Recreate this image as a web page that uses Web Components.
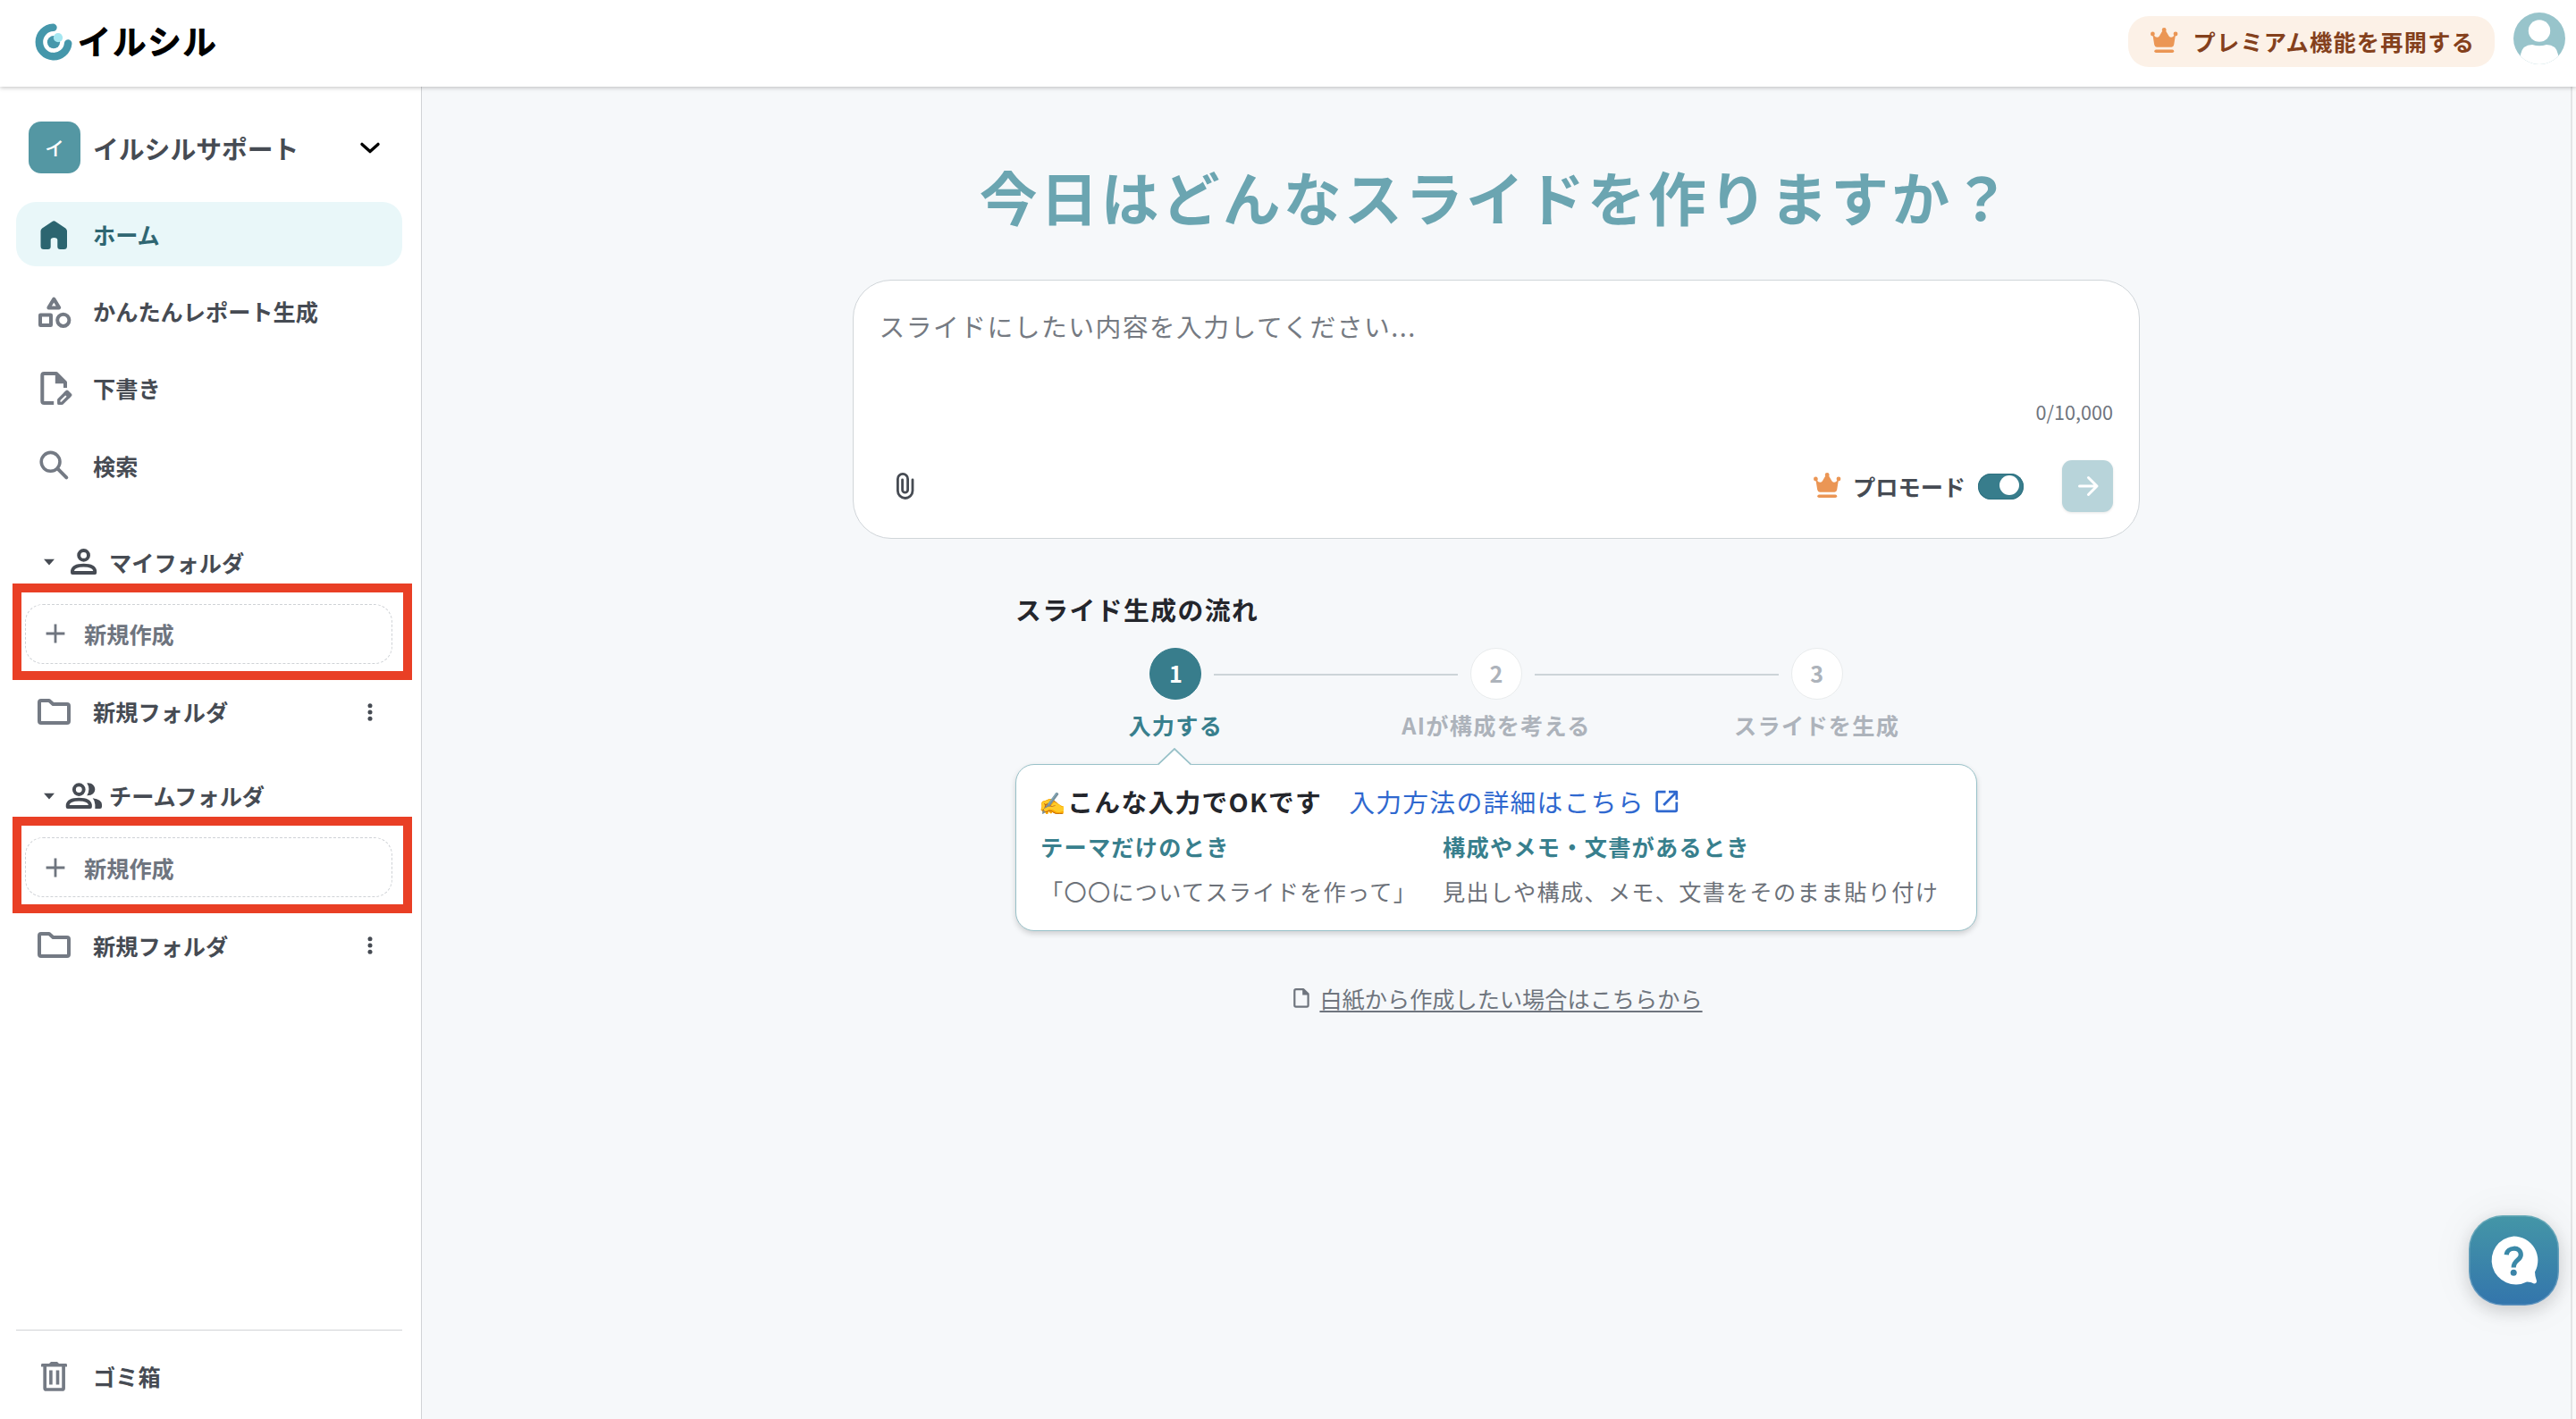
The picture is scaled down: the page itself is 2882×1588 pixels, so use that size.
<!DOCTYPE html>
<html lang="ja">
<head>
<meta charset="utf-8">
<title>イルシル</title>
<style>
    html, body {
        margin: 0;
        height: 100%;
        overflow: hidden;
    }

    body {
        font-family: "Noto Sans CJK JP", "Noto Sans", sans-serif;
        font-size: 25.2px;
        color: #464b53;
        background: #f6f8fa;
    }
</style>
</head>
<body>
<slide-app></slide-app>

<script>
    // [width, height, markup]
    const ICONS = {
        home: [36, 36, '<path fill="currentColor" d="M15 4.2Q17.3 2.4 19.6 4.2L30.4 11.4Q32 12.6 32 14.6V31.5Q32 35 28.5 35H24.3Q21.3 35 21.3 32V24.5Q21.3 22 17.5 22Q13.7 22 13.7 24.5V32Q13.7 35 10.7 35H6Q2.5 35 2.5 31.5V14.6Q2.5 12.6 4.1 11.4Z"/>'],
        shapes: [36, 36, '<g stroke-width="4"><path d="M17.3 4.6L23.2 14.4H11.4Z"/><rect x="2" y="22.4" width="12" height="11.6" rx=".3"/><circle cx="27.8" cy="28.3" r="6.6"/></g>'],
        draft: [36, 36, '<path stroke-width="4" d="M17.2 34H6.3Q4.3 34 4.3 32V3Q4.3 1 6.3 1H20L30 11V17" stroke-linecap="butt"/><path fill="currentColor" d="M18.8 0V12.3H31.5V10.8L20.8 0Z"/><path stroke-width="3.4" d="M22.8 34.4V30.4L32 21.3L35.8 25L26.4 34.4Z"/><path stroke-width="3.4" d="M30.3 23L34 26.7"/>'],
        search: [36, 36, '<circle cx="13.6" cy="13.8" r="10.4" stroke-width="3.6"/><path stroke-width="4" d="M21.6 21.6L31.3 31.3"/>'],
        folder: [36, 36, '<path stroke-width="4" d="M3 5H12L16.4 9H32Q34 9 34 11V28Q34 30 32 30H3Q1 30 1 28V7Q1 5 3 5Z"/>'],
        trash: [36, 36, '<g transform="translate(0 1)"><path fill="currentColor" d="M4 3H12L14 1H21L23 3H31Q32 3 32 4.5V6.4H3V4.5Q3 3 4 3Z"/><path stroke-width="3.7" d="M7.2 5.5V30.5Q7.2 32 8.7 32H26.6Q28.1 32 28.1 30.5V5.5"/><path stroke-width="3.6" stroke-linecap="butt" d="M13.9 10.5V26.5M21.5 10.5V26.5"/></g>'],
        person: [42, 29, '<g transform="translate(6 0)" stroke-width="3.9"><circle cx="14.6" cy="7.4" r="5.4"/><path d="M2 27V24.8Q3 18.6 14.6 18.6T27.2 24.8V27Z"/></g>'],
        group: [42, 29, '<g stroke-width="3.9"><circle cx="15.3" cy="7.6" r="5.4"/><path d="M2.7 27V24.8Q3.7 18.6 15.3 18.6T27.9 24.8V27Z"/></g><path fill="currentColor" d="M24.3 .3C30 -.2 33.3 3.5 33.3 7.3S30 14.6 24.3 14.3Q28.6 7.2 24.3 .3ZM30.7 17.2Q41 18.5 41 24.5V26.8Q41 29 38.8 29H33.4V24.5Q33.4 20 30.7 17.2Z"/>'],
        caret: [12, 7, '<path fill="currentColor" d="M0 .8H12L6 7.4Z"/>'],
        chevron: [22, 13, '<path stroke-width="3.4" d="M2 2.4L11 10.6L20 2.4"/>'],
        plus: [22, 22, '<path stroke-width="2.8" stroke-linecap="butt" d="M11 .6V21.4M.6 11H21.4"/>'],
        dots: [6, 20, '<g fill="currentColor"><circle cx="3" cy="2.7" r="2.5"/><circle cx="3" cy="10" r="2.5"/><circle cx="3" cy="17.3" r="2.5"/></g>'],
        crown: [30, 28, '<g fill="currentColor"><circle cx="2.4" cy="7" r="2.4"/><circle cx="15.2" cy="2.4" r="2.4"/><circle cx="28" cy="7" r="2.4"/><path d="M2.3 7L5.5 10.2Q8 11.4 9.8 9.4L13.6 3H16.8L20.6 9.4Q22.4 11.4 24.9 10.2L28.1 7L26.2 19Q25.7 21.7 23.4 21.7H7Q4.7 21.7 4.2 19Z"/><rect x="4.3" y="24.4" width="21.9" height="3.6" rx="1.8"/></g>'],
        clip: [20, 30, '<path stroke-width="2.8" d="M18 7.8V20.2A8.3 8.3 0 0 1 1.4 20.2V7A5.6 5.6 0 0 1 12.6 7V19.2A3 3 0 0 1 6.6 19.2V7.8"/>'],
        arrow: [24, 24, '<path stroke-width="3" d="M2.5 12H22M12.5 2.5L22 12L12.5 21.5"/>'],
        external: [26, 26, '<path stroke-width="2.7" stroke-linecap="butt" d="M11.5 2.2H3.2Q1.6 2.2 1.6 3.8V22.3Q1.6 23.9 3.2 23.9H22.2Q23.8 23.9 23.8 22.3V13.6M15 2.2H23.8V11M23.4 2.6L9.2 17"/>'],
        file: [18, 22, '<path stroke-width="2.2" d="M3 1.2H11.4L16.6 6.4V19Q16.6 20.6 15 20.6H3Q1.3 20.6 1.3 19V2.8Q1.3 1.2 3 1.2Z"/><path fill="currentColor" d="M10.2 1V7.4H17V6.2L11.8 1Z"/>'],
        logo: [42, 42, '<path stroke="#4597ab" stroke-width="8.6" d="M20.4 4.8A16.2 16.2 0 1 0 37.2 22.6"/><circle cx="21" cy="21.2" r="7.1" fill="#4597ab"/><circle cx="26" cy="16.2" r="5.1" fill="#a5e7f1"/>'],
        avatar: [58, 58, '<clipPath id="c"><circle cx="29" cy="29" r="29"/></clipPath><g clip-path="url(#c)"><rect width="58" height="58" fill="#98c4cb"/><path fill="#fff" d="M8 58V47Q10 36 21 36Q29 38.6 37 36Q48 36 50 47V58Z"/><circle cx="29" cy="20.5" r="12.2" fill="#fff"/></g>'],
        help: [56, 56, '<path fill="#fff" d="M27.3 .5A27 27 0 0 1 51 40.5Q51 45 53 50.5Q53 53.5 50 53.4Q46.5 51.3 42 51.4A27 27 0 1 1 27.3 .5Z"/><path stroke="#3b89a8" stroke-width="5.2" stroke-linecap="butt" d="M19.2 21.2C20 12.4 35.3 11.4 35.3 21.2C35.3 27.5 27.2 26.5 27.2 35.5"/><circle cx="27.2" cy="41.3" r="3.5" fill="#3b84a8"/>']
    };

    class UiIcon extends HTMLElement {
        connectedCallback() {
            const [w, h, body] = ICONS[this.getAttribute('name')];
            this.attachShadow({ mode: 'open' });
            this.shadowRoot.innerHTML = `
                <style>
                    :host { display: block; flex: none; width: ${w}px; height: ${h}px; }
                    svg { display: block; overflow: visible; }
                </style>
                <svg width="${w}" height="${h}" viewBox="0 0 ${w} ${h}" fill="none" stroke-linecap="round" stroke-linejoin="round">
                    ${body.replace(/<(g|path|rect|circle)([^>]*stroke-width)(?![^>]*stroke=)/g, (m, tag, rest) => rest.includes('stroke="') ? m : `<${tag} stroke="currentColor"${rest}`)}
                </svg>
            `;
        }
    }

    class AppHeader extends HTMLElement {
        connectedCallback() {
            this.attachShadow({ mode: 'open' });
            this.shadowRoot.innerHTML = `
                <style>
                    :host {
                        display: flex;
                        flex: none;
                        justify-content: space-between;
                        height: 97px;
                        box-sizing: border-box;
                        padding: 0 12px 0 39px;
                        background: #fff;
                        box-shadow: 0 1px 5px rgba(0, 0, 0, 0.25);
                        z-index: 2;
                    }

                    .logo {
                        display: flex;
                        gap: 6px;
                        height: 93px;
                        align-items: center;
                    }

                    .logo svg { overflow: visible; }

                    /* svg text so that the stroke can have round joins */
                    .logo text {
                        font-size: 37px;
                        font-weight: 500;
                        letter-spacing: 2.2px;
                        stroke: #000;
                        stroke-width: 1.8px;
                        stroke-linejoin: round;
                    }

                    .right {
                        display: flex;
                        align-items: flex-start;
                        gap: 21px;
                    }

                    .premium {
                        display: flex;
                        align-items: center;
                        gap: 17.5px;
                        box-sizing: border-box;
                        width: 410px;
                        height: 57px;
                        margin-top: 18px;
                        padding-left: 25px;
                        border-radius: 23px;
                        background: #fcf1e7;
                        color: #84401c;
                        font-weight: 700;
                        letter-spacing: 0.05em;
                        white-space: nowrap;
                    }

                    .premium ui-icon { color: #eb9655; margin-top: -3px; }
                    .premium span { margin-top: -2px; }
                    .avatar { margin-top: 14px; }
                </style>
                <div class="logo">
                    <ui-icon name="logo"></ui-icon>
                    <svg width="170" height="64"><text x="0" y="45.5">イルシル</text></svg>
                </div>
                <div class="right">
                    <div class="premium"><ui-icon name="crown"></ui-icon><span>プレミアム機能を再開する</span></div>
                    <ui-icon class="avatar" name="avatar"></ui-icon>
                </div>
            `;
        }
    }

    class NavItem extends HTMLElement {
        connectedCallback() {
            const menu = this.hasAttribute('menu') ? '<ui-icon class="menu" name="dots"></ui-icon>' : '';
            this.attachShadow({ mode: 'open' });
            this.shadowRoot.innerHTML = `
                <style>
                    :host {
                        display: flex;
                        align-items: center;
                        gap: 25px;
                        height: 72px;
                        box-sizing: border-box;
                        padding: 0 33px 0 25px;
                        border-radius: 22px;
                        font-weight: 700;
                        line-height: 36px;
                    }

                    :host([active]) { background: #e9f7f9; color: #2f6672; }
                    ui-icon { color: #747a84; }
                    :host([active]) ui-icon { color: #2c6570; }
                    .label { flex: 1; margin-top: -1px; }
                    .menu { color: #464b53; }
                </style>
                <ui-icon name="${this.getAttribute('icon')}"></ui-icon>
                <span class="label"><slot></slot></span>
                ${menu}
            `;
        }
    }

    class FolderSection extends HTMLElement {
        connectedCallback() {
            this.attachShadow({ mode: 'open' });
            this.shadowRoot.innerHTML = `
                <style>
                    :host { display: block; margin-bottom: 33.4px; }

                    .title {
                        display: flex;
                        align-items: center;
                        height: 48px;
                        padding-left: 31px;
                        font-weight: 700;
                    }

                    .title ui-icon:first-child { margin-right: 12px; }
                    .title span { margin-left: 7px; }

                    .create {
                        position: relative;
                        display: flex;
                        align-items: center;
                        gap: 21px;
                        box-sizing: border-box;
                        height: 67px;
                        margin: 23px 11px 18px 10px;
                        padding-left: 22px;
                        border: 1px dashed #cfd2d6;
                        border-radius: 20px;
                        color: #6f757f;
                        font-weight: 700;
                    }

                    .frame {
                        position: absolute;
                        inset: -24px -23px -19px -15px;
                        border: 10px solid #e93f25;
                    }
                </style>
                <div class="title">
                    <ui-icon name="caret"></ui-icon>
                    <ui-icon name="${this.getAttribute('icon')}"></ui-icon>
                    <span>${this.getAttribute('label')}</span>
                </div>
                <div class="create">
                    <ui-icon name="plus"></ui-icon>
                    <span>新規作成</span>
                    <div class="frame"></div>
                </div>
                <slot></slot>
            `;
        }
    }

    class SideBar extends HTMLElement {
        connectedCallback() {
            this.attachShadow({ mode: 'open' });
            this.shadowRoot.innerHTML = `
                <style>
                    :host {
                        display: flex;
                        flex: none;
                        flex-direction: column;
                        box-sizing: border-box;
                        width: 472px;
                        padding: 39px 21px 12px 18px;
                        border-right: 1px solid #d1d3d6;
                        background: #fff;
                    }

                    .workspace {
                        display: flex;
                        align-items: center;
                        height: 58px;
                        padding: 0 25px 0 14px;
                        margin-bottom: 32px;
                        font-size: 28.8px;
                        font-weight: 700;
                    }

                    .workspace span { flex: 1; margin-left: 14px; }
                    .workspace ui-icon { color: #000; }

                    .badge {
                        width: 58px;
                        line-height: 58px;
                        border-radius: 14px;
                        background: #5497a3;
                        color: #fff;
                        font-size: 21.6px;
                        font-weight: 500;
                        text-align: center;
                    }

                    nav {
                        display: flex;
                        flex-direction: column;
                        gap: 14.4px;
                        margin-bottom: 47.8px;
                    }

                    .footer {
                        margin-top: auto;
                        padding-top: 15px;
                        border-top: 1px solid #d1d3d6;
                    }
                </style>
                <div class="workspace">
                    <div class="badge">イ</div>
                    <span>イルシルサポート</span>
                    <ui-icon name="chevron"></ui-icon>
                </div>
                <nav>
                    <nav-item icon="home" active>ホーム</nav-item>
                    <nav-item icon="shapes">かんたんレポート生成</nav-item>
                    <nav-item icon="draft">下書き</nav-item>
                    <nav-item icon="search">検索</nav-item>
                </nav>
                <folder-section icon="person" label="マイフォルダ">
                    <nav-item icon="folder" menu>新規フォルダ</nav-item>
                </folder-section>
                <folder-section icon="group" label="チームフォルダ">
                    <nav-item icon="folder" menu>新規フォルダ</nav-item>
                </folder-section>
                <div class="footer"><nav-item icon="trash">ゴミ箱</nav-item></div>
            `;
        }
    }

    class PromptCard extends HTMLElement {
        connectedCallback() {
            this.attachShadow({ mode: 'open' });
            this.shadowRoot.innerHTML = `
                <style>
                    :host {
                        display: flex;
                        flex-direction: column;
                        box-sizing: border-box;
                        width: 1440px;
                        height: 290px;
                        padding: 29px 29px 29px 28.5px;
                        border: 1px solid #d0d5d9;
                        border-radius: 43px;
                        background: #fff;
                    }

                    .placeholder {
                        font-size: 28.8px;
                        line-height: 43px;
                        letter-spacing: 0.05em;
                        color: #757a82;
                    }

                    .count {
                        margin-top: 58px;
                        font-size: 21.6px;
                        line-height: 34px;
                        text-align: right;
                        color: #6f757e;
                    }

                    .tools {
                        display: flex;
                        align-items: center;
                        height: 58px;
                        margin-top: auto;
                        padding-left: 19.5px;
                    }

                    .pro {
                        display: flex;
                        align-items: center;
                        margin-left: auto;
                        font-weight: 700;
                    }

                    .pro ui-icon { color: #eb9655; margin-top: -3px; }
                    .pro span { margin: 0 14px 0 14px; }

                    .toggle {
                        box-sizing: border-box;
                        width: 51px;
                        height: 29px;
                        padding: 2px 5px 0 24px;
                        border-radius: 15px;
                        background: #387d8c;
                        box-shadow: inset 0 0 0 1px #2f7180;
                    }

                    .toggle i {
                        display: block;
                        width: 22px;
                        height: 22px;
                        border-radius: 50%;
                        background: #fff;
                    }

                    .send {
                        display: flex;
                        align-items: center;
                        justify-content: center;
                        width: 57px;
                        height: 58px;
                        margin-left: 43px;
                        border-radius: 11px;
                        background: #b8d4da;
                        color: #fff;
                        box-shadow: 0 1px 3px rgba(0, 0, 0, 0.1);
                    }
                </style>
                <div class="placeholder">スライドにしたい内容を入力してください...</div>
                <div class="count">0/10,000</div>
                <div class="tools">
                    <ui-icon name="clip"></ui-icon>
                    <div class="pro">
                        <ui-icon name="crown"></ui-icon>
                        <span>プロモード</span>
                        <div class="toggle"><i></i></div>
                    </div>
                    <div class="send"><ui-icon name="arrow"></ui-icon></div>
                </div>
            `;
        }
    }

    class StepItem extends HTMLElement {
        connectedCallback() {
            this.attachShadow({ mode: 'open' });
            this.shadowRoot.innerHTML = `
                <style>
                    :host {
                        display: grid;
                        grid-template-columns: 1fr 58px 1fr;
                        column-gap: 14px;
                        align-items: center;
                        font-weight: 700;
                        color: #adb3bb;
                    }

                    :host([active]) { color: #387f8d; }

                    .line { height: 2px; margin-top: 2px; background: #cdd4d8; }
                    :host([first]) .before, :host([last]) .after { visibility: hidden; }

                    .circle {
                        box-sizing: border-box;
                        width: 58px;
                        height: 58px;
                        line-height: 55px;
                        border: 1px solid #e9eced;
                        border-radius: 50%;
                        background: #fff;
                        text-align: center;
                    }

                    :host([active]) .circle {
                        border-color: #387d8c;
                        background: #387d8c;
                        color: #fff;
                    }

                    .label {
                        grid-column: 1 / -1;
                        margin-top: 9px;
                        line-height: 38px;
                        letter-spacing: 0.05em;
                        text-align: center;
                    }
                </style>
                <div class="line before"></div>
                <div class="circle">${this.getAttribute('number')}</div>
                <div class="line after"></div>
                <div class="label"><slot></slot></div>
            `;
        }
    }

    class StepFlow extends HTMLElement {
        connectedCallback() {
            this.attachShadow({ mode: 'open' });
            this.shadowRoot.innerHTML = `
                <style>
                    :host { display: block; width: 1076px; margin-top: 57px; }

                    h2 {
                        margin: 0;
                        color: #24262c;
                        font-size: 28.8px;
                        line-height: 44px;
                        letter-spacing: 0.05em;
                    }

                    .steps {
                        display: grid;
                        grid-template-columns: repeat(3, 1fr);
                        margin-top: 21px;
                    }
                </style>
                <h2>スライド生成の流れ</h2>
                <div class="steps">
                    <step-item number="1" first active>入力する</step-item>
                    <step-item number="2">AIが構成を考える</step-item>
                    <step-item number="3" last>スライドを生成</step-item>
                </div>
                <slot></slot>
            `;
        }
    }

    class TipCard extends HTMLElement {
        connectedCallback() {
            this.attachShadow({ mode: 'open' });
            this.shadowRoot.innerHTML = `
                <style>
                    :host {
                        position: relative;
                        display: block;
                        box-sizing: border-box;
                        height: 187px;
                        margin-top: 25px;
                        padding: 19px 27px;
                        border: 1px solid #98c1c8;
                        border-radius: 21px;
                        background: #fff;
                        box-shadow: 0 3px 6px rgba(0, 0, 0, 0.16);
                        letter-spacing: 0.05em;
                        white-space: nowrap;
                    }

                    .pointer {
                        position: absolute;
                        left: 158px;
                        top: -19px;
                    }

                    .head {
                        display: flex;
                        align-items: center;
                        height: 44px;
                        font-size: 28.8px;
                        line-height: 44px;
                    }

                    .head b { color: #24262c; }

                    .head b span {
                        margin-left: -2px;
                        font-size: 24.5px;
                        line-height: 1;
                        vertical-align: 1.5px;
                    }

                    .head a {
                        display: flex;
                        align-items: center;
                        gap: 12px;
                        margin-left: 30px;
                        color: #2f68cf;
                    }

                    .cols {
                        display: grid;
                        grid-template-columns: 421px auto;
                        column-gap: 29px;
                        justify-content: start;
                        color: #6c7179;
                        line-height: 38px;
                        row-gap: 12px;
                        margin-top: 9px;
                    }

                    .cols b { color: #387f8d; }
                </style>
                <svg class="pointer" width="38" height="21" viewBox="0 0 38 21">
                    <path d="M0 21V19L19 1L38 19V21Z" fill="#fff"/>
                    <path d="M.5 18.7L19 1L37.5 18.7" fill="none" stroke="#98c1c8" stroke-width="1.8"/>
                </svg>
                <div class="head">
                    <b><span>✍️</span>こんな入力でOKです</b>
                    <a>入力方法の詳細はこちら<ui-icon name="external"></ui-icon></a>
                </div>
                <div class="cols">
                    <b>テーマだけのとき</b>
                    <b>構成やメモ・文書があるとき</b>
                    <span>「〇〇についてスライドを作って」</span>
                    <span>見出しや構成、メモ、文書をそのまま貼り付け</span>
                </div>
            `;
        }
    }

    class HelpButton extends HTMLElement {
        connectedCallback() {
            this.attachShadow({ mode: 'open' });
            this.shadowRoot.innerHTML = `
                <style>
                    :host {
                        position: fixed;
                        right: 19px;
                        bottom: 127px;
                        display: block;
                        box-sizing: border-box;
                        width: 101px;
                        height: 101px;
                        padding: 23px 0 0 22.5px;
                        border-radius: 38px;
                        background: linear-gradient(#4496a7, #3375ac);
                        box-shadow: inset 0 0 0 1.5px rgba(255, 255, 255, 0.2), 0 6px 20px rgba(0, 0, 0, 0.16), 0 0 50px rgba(0, 0, 0, 0.06);
                        z-index: 3;
                    }
                </style>
                <ui-icon name="help"></ui-icon>
            `;
        }
    }

    class SlideApp extends HTMLElement {
        connectedCallback() {
            this.attachShadow({ mode: 'open' });
            this.shadowRoot.innerHTML = `
                <style>
                    :host { display: flex; flex-direction: column; height: 100vh; }
                    .body { display: flex; flex: 1; min-height: 0; }

                    main {
                        display: flex;
                        flex: 1;
                        flex-direction: column;
                        align-items: center;
                        padding-top: 73px;
                    }

                    h1 {
                        margin: 0 0 45px;
                        color: #6ba5b1;
                        font-size: 64.8px;
                        line-height: 98px;
                        letter-spacing: 0.05em;
                    }

                    .blank {
                        display: flex;
                        align-items: center;
                        gap: 11px;
                        margin-top: 56px;
                        padding-left: 4px;
                        line-height: 38px;
                        color: #6f757e;
                    }

                    .blank a {
                        text-decoration: underline;
                        text-decoration-thickness: 2px;
                        text-underline-offset: 3px;
                        text-decoration-skip-ink: none;
                    }

                    .gutter {
                        flex: none;
                        width: 4px;
                        border-left: 2px solid #e4e5e6;
                        background: #fafafa;
                    }
                </style>
                <app-header></app-header>
                <div class="body">
                    <side-bar></side-bar>
                    <main>
                        <h1>今日はどんなスライドを作りますか？</h1>
                        <prompt-card></prompt-card>
                        <step-flow><tip-card></tip-card></step-flow>
                        <div class="blank"><ui-icon name="file"></ui-icon><a>白紙から作成したい場合はこちらから</a></div>
                    </main>
                    <div class="gutter"></div>
                </div>
                <help-button></help-button>
            `;
        }
    }

    customElements.define('ui-icon', UiIcon);
    customElements.define('app-header', AppHeader);
    customElements.define('nav-item', NavItem);
    customElements.define('folder-section', FolderSection);
    customElements.define('side-bar', SideBar);
    customElements.define('prompt-card', PromptCard);
    customElements.define('step-item', StepItem);
    customElements.define('step-flow', StepFlow);
    customElements.define('tip-card', TipCard);
    customElements.define('help-button', HelpButton);
    customElements.define('slide-app', SlideApp);
</script>
</body>
</html>
